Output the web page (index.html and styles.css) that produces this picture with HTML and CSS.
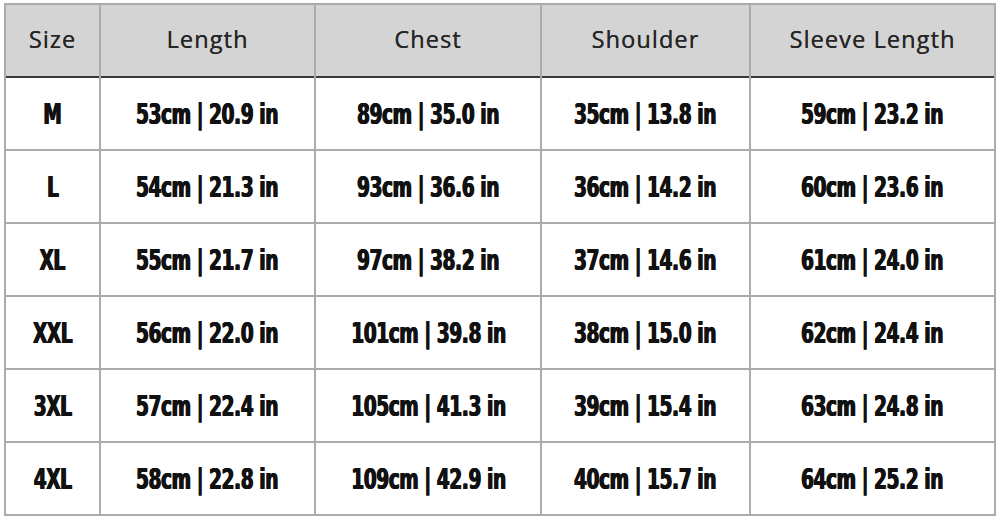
FILE: index.html
```html
<!DOCTYPE html>
<html>
<head>
<meta charset="utf-8">
<link rel="stylesheet" href="styles.css">
</head>
<body>
<div class="chart">
  <div class="cell head">Size</div>
  <div class="cell head">Length</div>
  <div class="cell head">Chest</div>
  <div class="cell head">Shoulder</div>
  <div class="cell head">Sleeve Length</div>

  <div class="cell val"><span class="t">M</span></div>
  <div class="cell val"><span class="t">53cm | 20.9 in</span></div>
  <div class="cell val"><span class="t">89cm | 35.0 in</span></div>
  <div class="cell val"><span class="t">35cm | 13.8 in</span></div>
  <div class="cell val"><span class="t">59cm | 23.2 in</span></div>

  <div class="cell val"><span class="t">L</span></div>
  <div class="cell val"><span class="t">54cm | 21.3 in</span></div>
  <div class="cell val"><span class="t">93cm | 36.6 in</span></div>
  <div class="cell val"><span class="t">36cm | 14.2 in</span></div>
  <div class="cell val"><span class="t">60cm | 23.6 in</span></div>

  <div class="cell val"><span class="t">XL</span></div>
  <div class="cell val"><span class="t">55cm | 21.7 in</span></div>
  <div class="cell val"><span class="t">97cm | 38.2 in</span></div>
  <div class="cell val"><span class="t">37cm | 14.6 in</span></div>
  <div class="cell val"><span class="t">61cm | 24.0 in</span></div>

  <div class="cell val"><span class="t">XXL</span></div>
  <div class="cell val"><span class="t">56cm | 22.0 in</span></div>
  <div class="cell val"><span class="t">101cm | 39.8 in</span></div>
  <div class="cell val"><span class="t">38cm | 15.0 in</span></div>
  <div class="cell val"><span class="t">62cm | 24.4 in</span></div>

  <div class="cell val"><span class="t">3XL</span></div>
  <div class="cell val"><span class="t">57cm | 22.4 in</span></div>
  <div class="cell val"><span class="t">105cm | 41.3 in</span></div>
  <div class="cell val"><span class="t">39cm | 15.4 in</span></div>
  <div class="cell val"><span class="t">63cm | 24.8 in</span></div>

  <div class="cell val"><span class="t">4XL</span></div>
  <div class="cell val"><span class="t">58cm | 22.8 in</span></div>
  <div class="cell val"><span class="t">109cm | 42.9 in</span></div>
  <div class="cell val"><span class="t">40cm | 15.7 in</span></div>
  <div class="cell val"><span class="t">64cm | 25.2 in</span></div>
</div>
</body>
</html>
```

FILE: styles.css
```css
html, body {
  margin: 0;
  padding: 0;
  background: #ffffff;
}

.chart {
  display: grid;
  grid-template-columns: 93px 213px 224px 207px 243px;
  grid-template-rows: repeat(7, 71px);
  gap: 2px;
  width: fit-content;
  margin: 3px 0 0 4px;
  border: 2px solid #ababab;
  background: #ababab;
}

.cell {
  display: flex;
  align-items: center;
  justify-content: center;
  background: #ffffff;
  white-space: nowrap;
}

.head {
  background: #d4d4d4;
  color: #262626;
  font-family: "Open Sans", "DejaVu Sans", sans-serif;
  font-size: 23.5px;
  letter-spacing: 1.1px;
  padding-bottom: 4px;
  box-shadow: 0 2px 0 0 #3a3a3a;
  text-shadow: 0.2px 0 0 #262626;
}

.val {
  color: #111111;
  font-family: "DejaVu Sans Condensed", "DejaVu Sans", sans-serif;
  font-weight: 700;
  font-size: 28px;
  padding-top: 2px;
}

.t {
  display: inline-block;
  letter-spacing: -0.6px;
  transform: scaleX(0.74);
  text-shadow: 0.7px 0 0 #111111, -0.7px 0 0 #111111;
}
```
